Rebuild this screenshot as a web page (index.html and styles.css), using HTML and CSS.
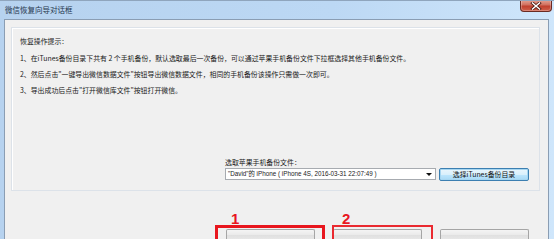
FILE: index.html
```html
<!DOCTYPE html>
<html lang="zh-CN">
<head>
<meta charset="utf-8">
<title>微信恢复向导对话框</title>
<link rel="stylesheet" href="styles.css">
</head>
<body>
<div class="window">
  <div class="titlebar">
    <span class="title">微信恢复向导对话框</span>
    <span class="close">
      <svg width="14" height="8" viewBox="0 0 14 8">
        <path d="M3.5 1 L10.5 7 M10.5 1 L3.5 7" stroke="#4a1a14" stroke-width="3" stroke-linecap="square"/>
        <path d="M3.5 1 L10.5 7 M10.5 1 L3.5 7" stroke="#ffffff" stroke-width="1.5" stroke-linecap="square"/>
      </svg>
    </span>
  </div>
  <div class="client">
    <div class="group">
      <p class="heading">恢复操作提示：</p>
      <p class="line">1、在iTunes备份目录下共有 2 个手机备份，默认选取最后一次备份，可以通过苹果手机备份文件下拉框选择其他手机备份文件。</p>
      <p class="line">2、然后点击"一键导出微信数据文件"按钮导出微信数据文件，相同的手机备份该操作只需做一次即可。</p>
      <p class="line">3、导出成功后点击"打开微信库文件"按钮打开微信。</p>
      <div class="picker">
        <div class="picker-label">选取苹果手机备份文件：</div>
        <div class="picker-row">
          <div class="combo">
            <span class="combo-text">"David"的 iPhone ( iPhone 4S, 2016-03-31 22:07:49 )</span>
            <span class="combo-arrow"></span>
          </div>
          <div class="btn btn-default">选择iTunes备份目录</div>
        </div>
      </div>
    </div>
    <div class="actions">
      <div class="btn btn-big mark mark-1"><span class="mark-box"></span><span class="mark-num">1</span></div>
      <div class="btn btn-big mark mark-2"><span class="mark-box"></span><span class="mark-num">2</span></div>
      <div class="btn btn-big"></div>
    </div>
  </div>
</div>
</body>
</html>
```
FILE: styles.css
```css
* { box-sizing: border-box; }
html, body { margin: 0; padding: 0; }
body {
  width: 554px;
  height: 239px;
  overflow: hidden;
  font-family: "Noto Sans CJK SC", "Liberation Sans", sans-serif;
  color: #1a1a1a;
}
.window {
  width: 554px;
  height: 239px;
  display: flex;
  flex-direction: column;
  background: linear-gradient(90deg, #b6d2ef 0%, #bcd8f4 60%, #cfe6fb 100%);
  border-top: 1px solid #8fa5bd;
  overflow: hidden;
}
.titlebar {
  height: 18px;
  flex-shrink: 0;
  display: flex;
  align-items: flex-start;
  padding-left: 5px;
  padding-right: 2px;
}
.title {
  font-size: 7.5px;
  line-height: 18px;
  color: #26384e;
}
.close {
  margin-left: auto;
  width: 32px;
  height: 12px;
  margin-top: -1px;
  border: 1px solid #6a2a22;
  border-top: none;
  border-radius: 0 0 4px 4px;
  background: linear-gradient(180deg, #e6a394 0%, #d0705f 45%, #c0402e 55%, #d0604a 100%);
  display: flex;
  align-items: center;
  justify-content: center;
  box-shadow: inset 0 0 0 1px rgba(255,255,255,0.25);
}
.close svg { display: block; }
.client {
  flex: 1;
  margin-left: 4px;
  margin-right: 5px;
  background: #f0f0f0;
  border: 1px solid #8a9db3;
  border-bottom: none;
  display: flex;
  flex-direction: column;
  min-height: 0;
  overflow: hidden;
}
.group {
  flex-shrink: 0;
  margin: 7px 8px 0 6px;
  height: 164px;
  border: 1px solid #dce2e9;
  box-shadow: inset 1px 1px 0 #ffffff;
  padding: 5px 10px 9px 8px;
  display: flex;
  flex-direction: column;
  font-size: 6.9px;
}
.group p { margin: 0; line-height: 16px; }
.heading { margin-bottom: 1px !important; }
.picker {
  margin-top: auto;
  align-self: flex-end;
  display: flex;
  flex-direction: column;
}
.picker-label {
  font-size: 6.9px;
  line-height: 12px;
}
.picker-row {
  display: flex;
  gap: 3px;
  align-items: flex-start;
}
.combo {
  width: 211px;
  height: 12px;
  background: #ffffff;
  border: 1px solid #a7abb0;
  display: flex;
  align-items: center;
  padding-left: 2px;
  padding-right: 3px;
}
.combo-text {
  font-family: "Liberation Sans", "Noto Sans CJK SC", sans-serif;
  font-size: 6.3px;
  line-height: 10px;
  white-space: nowrap;
  color: #222;
}
.combo-arrow {
  margin-left: auto;
  width: 0;
  height: 0;
  border-left: 3px solid transparent;
  border-right: 3px solid transparent;
  border-top: 3px solid #111;
}
.btn {
  width: 90px;
  height: 13px;
  border: 1px solid #a5a5a5;
  border-radius: 2px;
  background: linear-gradient(180deg, #f4f4f4 0%, #ebebeb 50%, #dfdfdf 51%, #e6e6e6 100%);
  font-size: 6.9px;
  line-height: 11px;
  text-align: center;
  color: #111;
}
.btn-default {
  border-color: #3c7fb1;
  background: linear-gradient(180deg, #eaf6fd 0%, #d9f0fc 50%, #bee6fd 51%, #a7d9f5 100%);
  box-shadow: inset 0 0 0 1px #a6d6f1;
}
.actions {
  flex-shrink: 0;
  display: flex;
  justify-content: flex-end;
  gap: 18px;
  padding-right: 19px;
  margin-top: 38px;
}
.btn-big {
  width: 89px;
  height: 10px;
  border-bottom: none;
  border-radius: 2px 2px 0 0;
}
.mark { position: relative; }
.mark-box {
  position: absolute;
  border: 3px solid #e8161e;
  border-bottom: none;
  top: -5px;
  bottom: 0;
}
.mark-1 .mark-box { left: -12px; right: -11px; }
.mark-2 .mark-box { left: -2px; right: -12px; border-width: 2px; border-bottom: none; border-color: #ea2a30; }
.mark-num {
  position: absolute;
  top: -19px;
  font-family: "Liberation Sans", sans-serif;
  font-weight: bold;
  font-size: 15px;
  line-height: 15px;
  color: #e8161e;
}
.mark-1 .mark-num { left: 4px; }
.mark-2 .mark-num { left: 8px; }
```
